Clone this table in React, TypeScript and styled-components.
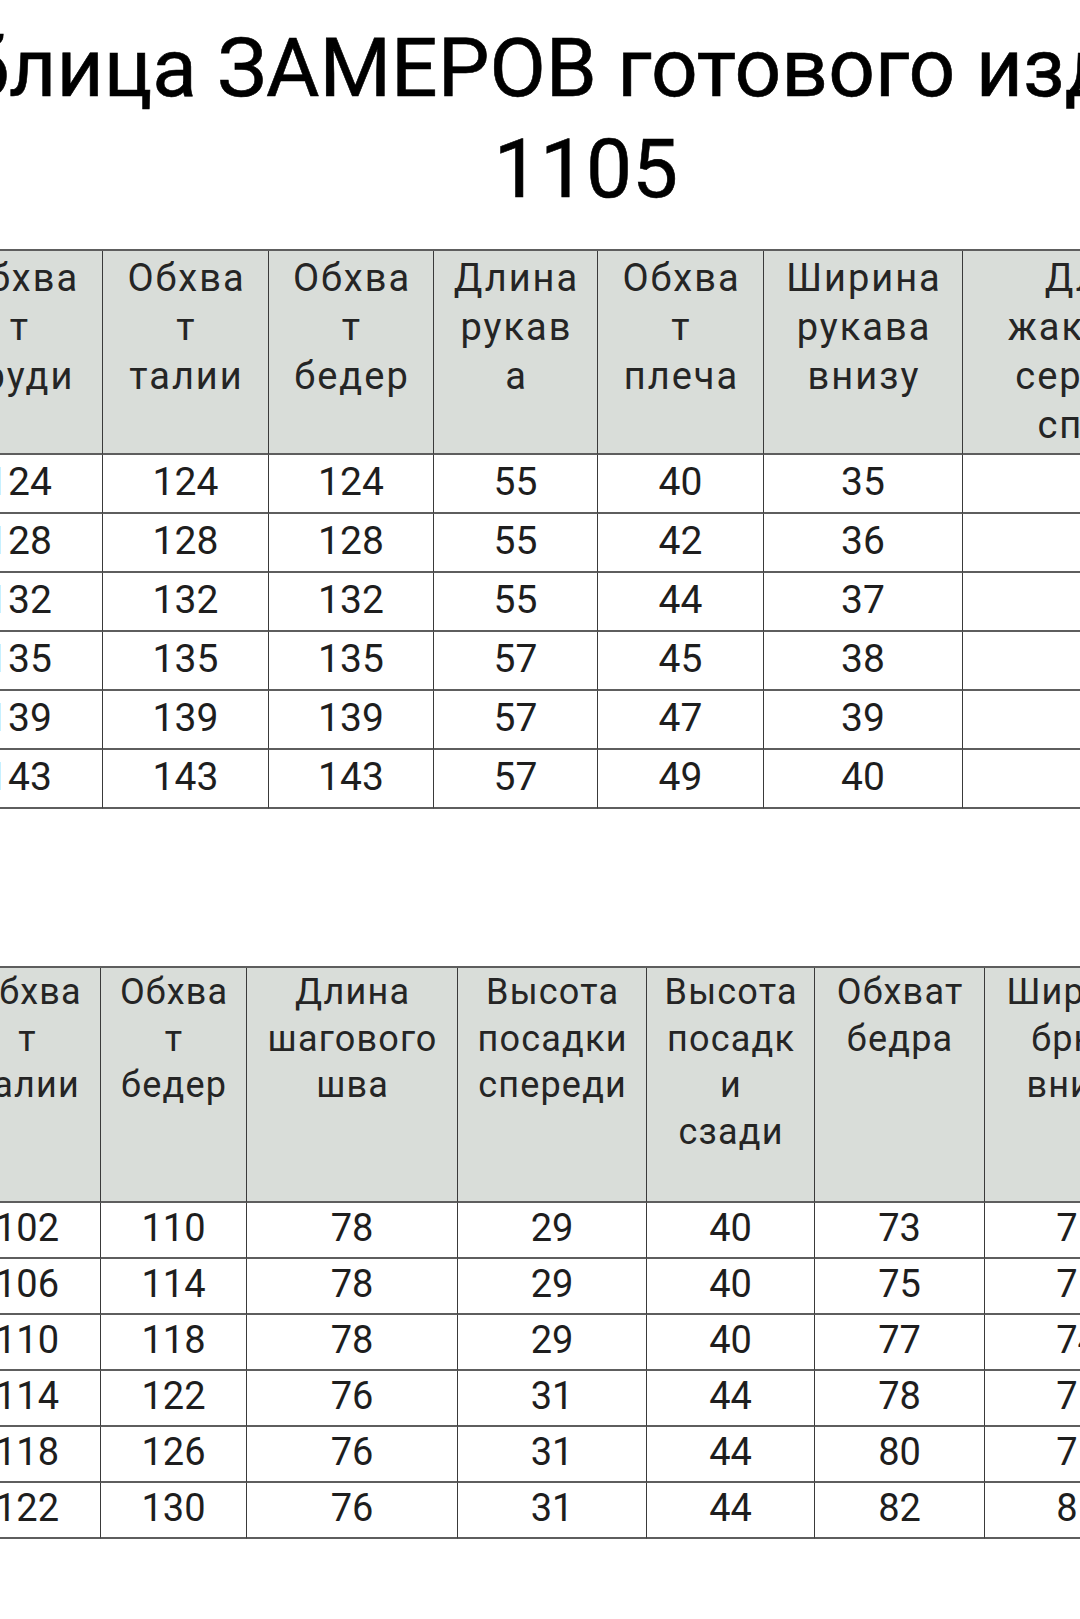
import React from 'react';
import styled, { createGlobalStyle } from 'styled-components';

const GlobalStyle = createGlobalStyle`
  html, body {
    margin: 0;
    padding: 0;
    background: #ffffff;
    overflow: hidden;
  }
  body {
    font-family: Roboto, 'Liberation Sans', sans-serif;
  }
`;

const Page = styled.div`
  width: 1080px;
  height: 1619px;
  overflow: hidden;
  background: #ffffff;
`;

// the sheet is wider than the window, it is cropped on both sides
const Sheet = styled.div`
  width: 1302px;
  margin-left: -65px;
  padding-top: 18px;
  display: flex;
  flex-direction: column;
`;

const Title = styled.h1`
  margin: 0;
  display: flex;
  flex-direction: column;
  align-items: center;
  font-family: Roboto, 'Liberation Sans', sans-serif;
  font-weight: 400;
  font-size: 82px;
  line-height: 101px;
  color: #000;
`;

const TitleLine = styled.span`
  white-space: nowrap;
  -webkit-text-stroke: 0.6px #000;
`;

const Grid = styled.div<{ $cols: number[]; $head: number; $row: number; $left: number; $top: number }>`
  display: grid;
  grid-template-columns: ${(p) => p.$cols.map((c) => `${c}px`).join(' ')};
  grid-template-rows: ${(p) => p.$head}px;
  grid-auto-rows: ${(p) => p.$row}px;
  width: max-content;
  margin-left: ${(p) => p.$left}px;
  margin-top: ${(p) => p.$top}px;
  border-top: 2px solid #5e5e5e;
  border-left: 1px solid #3a3a3a;
`;

const HeadCell = styled.div<{ $size: number; $lh: number; $pad: number; $spacing: number }>`
  box-sizing: border-box;
  display: flex;
  flex-direction: column;
  align-items: center;
  padding-top: ${(p) => p.$pad}px;
  padding-left: ${(p) => p.$spacing}px;
  background: #d9ddd9;
  border-right: 1px solid #3a3a3a;
  border-bottom: 2px solid #5e5e5e;
  font-size: ${(p) => p.$size}px;
  line-height: ${(p) => p.$lh}px;
  letter-spacing: ${(p) => p.$spacing}px;
  color: #252525;
  overflow: hidden;
`;

const HeadLine = styled.span`
  white-space: nowrap;
`;

const Cell = styled.div<{ $size: number }>`
  box-sizing: border-box;
  display: flex;
  align-items: center;
  justify-content: center;
  padding-bottom: 4px;
  border-right: 1px solid #3a3a3a;
  border-bottom: 2px solid #5e5e5e;
  font-size: ${(p) => p.$size}px;
  color: #1e1e1e;
  background: #fff;
`;

interface TableSpec {
  cols: number[];
  headers: string[][];
  rows: (string | number)[][];
  head: number;
  row: number;
  left: number;
  top: number;
  headSize: number;
  headLh: number;
  headPad: number;
  headSpacing: number;
  cellSize: number;
}

const jacket: TableSpec = {
  cols: [167, 166, 165, 164, 166, 199, 288],
  headers: [
    ['Обхва', 'т', 'груди'],
    ['Обхва', 'т', 'талии'],
    ['Обхва', 'т', 'бедер'],
    ['Длина', 'рукав', 'а'],
    ['Обхва', 'т', 'плеча'],
    ['Ширина', 'рукава', 'внизу'],
    ['Длина', 'жакета по', 'середине', 'спинки'],
  ],
  rows: [
    [124, 124, 124, 55, 40, 35, ''],
    [128, 128, 128, 55, 42, 36, ''],
    [132, 132, 132, 55, 44, 37, ''],
    [135, 135, 135, 57, 45, 38, ''],
    [139, 139, 139, 57, 47, 39, ''],
    [143, 143, 143, 57, 49, 40, ''],
  ],
  head: 204,
  row: 59,
  left: 0,
  top: 29,
  headSize: 38,
  headLh: 49,
  headPad: 3,
  headSpacing: 2,
  cellSize: 39,
};

const trousers: TableSpec = {
  cols: [147, 146, 211, 189, 168, 170, 186],
  headers: [
    ['Обхва', 'т', 'талии'],
    ['Обхва', 'т', 'бедер'],
    ['Длина', 'шагового', 'шва'],
    ['Высота', 'посадки', 'спереди'],
    ['Высота', 'посадк', 'и', 'сзади'],
    ['Обхват', 'бедра'],
    ['Ширина', 'брюк', 'внизу'],
  ],
  rows: [
    [102, 110, 78, 29, 40, 73, 71],
    [106, 114, 78, 29, 40, 75, 71],
    [110, 118, 78, 29, 40, 77, 74],
    [114, 122, 76, 31, 44, 78, 71],
    [118, 126, 76, 31, 44, 80, 71],
    [122, 130, 76, 31, 44, 82, 81],
  ],
  head: 235,
  row: 56,
  left: 18,
  top: 157,
  headSize: 36,
  headLh: 46.5,
  headPad: 1,
  headSpacing: 1.2,
  cellSize: 38,
};

const SizeTable: React.FC<{ spec: TableSpec }> = ({ spec }) => (
  <Grid $cols={spec.cols} $head={spec.head} $row={spec.row} $left={spec.left} $top={spec.top}>
    {spec.headers.map((lines, i) => (
      <HeadCell
        key={`h${i}`}
        $size={spec.headSize}
        $lh={spec.headLh}
        $pad={spec.headPad}
        $spacing={spec.headSpacing}
      >
        {lines.map((line, j) => (
          <HeadLine key={j}>{line}</HeadLine>
        ))}
      </HeadCell>
    ))}
    {spec.rows.map((row, r) =>
      row.map((value, c) => (
        <Cell key={`${r}-${c}`} $size={spec.cellSize}>
          {value}
        </Cell>
      ))
    )}
  </Grid>
);

const App: React.FC = () => (
  <Page>
    <GlobalStyle />
    <Sheet>
      <Title>
        <TitleLine>Таблица ЗАМЕРОВ готового изделия</TitleLine>
        <TitleLine>1105</TitleLine>
      </Title>
      <SizeTable spec={jacket} />
      <SizeTable spec={trousers} />
    </Sheet>
  </Page>
);

export default App;
